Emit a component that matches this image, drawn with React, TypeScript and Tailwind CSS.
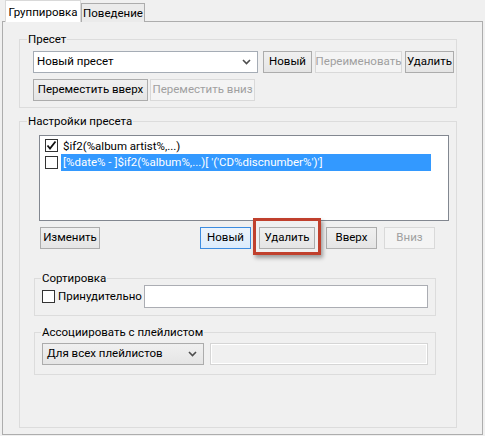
import React from "react";

type BtnProps = {
  children: React.ReactNode;
  w: string;
  disabled?: boolean;
  focused?: boolean;
  className?: string;
};

function Btn({ children, w, disabled = false, focused = false, className = "" }: BtnProps) {
  const look = disabled
    ? "border-[#d9d9d9] bg-[#f4f4f4] text-[#a0a0a0]"
    : focused
      ? "border-[#3c8ce0] bg-linear-to-b from-[#ecf4fc] to-[#dcecfc] text-black"
      : "border-[#acacac] bg-linear-to-b from-[#f0f0f0] to-[#e5e5e5] text-black";
  return (
    <div className={`${w} ${look} ${className} flex h-[22px] shrink-0 items-center justify-center whitespace-nowrap border leading-none`}>
      {children}
    </div>
  );
}

function Chevron() {
  return (
    <svg width="9" height="6" viewBox="0 0 9 6" className="shrink-0">
      <polyline points="1,1 4.5,4.5 8,1" fill="none" stroke="#4d4d4d" strokeWidth="1.6" />
    </svg>
  );
}

function CheckBox({ checked = false }: { checked?: boolean }) {
  return (
    <div className="flex h-[13px] w-[13px] shrink-0 items-center justify-center border border-[#333333] bg-white">
      {checked && (
        <svg width="11" height="11" viewBox="0 0 11 11">
          <polyline points="1.5,5.5 4,8.5 9.5,1.5" fill="none" stroke="#111" strokeWidth="1.8" />
        </svg>
      )}
    </div>
  );
}

function Legend({ children, ml }: { children: React.ReactNode; ml: string }) {
  return <legend className={`${ml} px-[1px] leading-[14px] text-black`}>{children}</legend>;
}

export default function App() {
  return (
    <div className="h-[436px] w-[485px] overflow-hidden bg-[#f0f0f0] font-['Roboto','Liberation_Sans',Arial,sans-serif] text-[11.5px] text-black">
      {/* tab strip */}
      <div className="flex h-[22px] items-end pl-[5px]">
        <div className="relative z-10 flex h-[22px] w-[76px] items-start justify-center border-x border-t border-[#d9d9d9] bg-white pt-[4px] leading-[14px]">
          Группировка
        </div>
        <div className="flex h-[19px] w-[64px] items-start justify-center border-x border-t border-[#acacac] bg-[#ebebeb] pt-[2px] leading-[14px]">
          Поведение
        </div>
      </div>

      {/* tab page */}
      <div className="-mt-px ml-[2px] h-[414px] w-[481px] border border-[#adadad] bg-[#f0f0f0] pt-[10px] pl-[16px]">
        {/* Пресет */}
        <fieldset className="w-[438px] border border-[#dcdcdc]">
          <Legend ml="ml-[7px]">Пресет</Legend>
          <div className="pt-[5px] pb-[6px] pl-[13px]">
            <div className="flex">
              <div className="flex h-[22px] w-[225px] items-center justify-between border border-[#a5acb5] bg-white pr-[6px] pl-[3px]">
                <span>Новый пресет</span>
                <Chevron />
              </div>
              <Btn w="w-[49px]" className="ml-[5px]">Новый</Btn>
              <Btn w="w-[87px]" className="ml-[3px]" disabled>
                Переименовать
              </Btn>
              <Btn w="w-[49px]" className="ml-[3px] border-[#707070]">Удалить</Btn>
            </div>
            <div className="mt-[6px] flex">
              <Btn w="w-[115px]">Переместить вверх</Btn>
              <Btn w="w-[105px]" className="ml-[2px]" disabled>
                Переместить вниз
              </Btn>
            </div>
          </div>
        </fieldset>

        {/* Настройки пресета */}
        <fieldset className="mt-[6px] h-[314px] w-[438px] border border-[#dcdcdc]">
          <Legend ml="ml-[7px]">Настройки пресета</Legend>
          <div className="pt-[7px] pl-[14px]">
            <div className="ml-[5px] h-[86px] w-[410px] border border-[#828790] bg-white pt-px pl-[5px]">
              <div className="flex h-[17px] items-center">
                <CheckBox checked />
                <span className="ml-[5px] leading-[14px]">$if2(%album artist%,...)</span>
              </div>
              <div className="flex h-[17px] items-center">
                <CheckBox />
                <div className="ml-[3px] flex h-[17px] w-[370px] items-center bg-[#3399ff] pl-[2px] text-white">
                  [%date% - ]$if2(%album%,...)[ '('CD%discnumber%')']
                </div>
              </div>
            </div>

            <div className="mt-[6px] ml-[6px] flex">
              <Btn w="w-[60px]">Изменить</Btn>
              <Btn w="w-[51px]" className="ml-[100px]" focused>
                Новый
              </Btn>
              <div className="relative ml-[8px]">
                <Btn w="w-[56px]">Удалить</Btn>
                <div className="absolute top-[-9px] left-[-6px] h-[37px] w-[68px] border-[3px] border-[#c0402d] shadow-[2px_3px_4px_rgba(0,0,0,0.35)]" />
              </div>
              <Btn w="w-[51px]" className="ml-[11px]">Вверх</Btn>
              <Btn w="w-[51px]" className="ml-[7px]" disabled>
                Вниз
              </Btn>
            </div>

            {/* Сортировка */}
            <fieldset className="mt-[22px] w-[402px] border border-[#dcdcdc]">
              <Legend ml="ml-[6px]">Сортировка</Legend>
              <div className="flex items-center pb-[7px] pl-[7px]">
                <div className="flex w-[102px] items-center">
                  <CheckBox />
                  <span className="ml-[3px]">Принудительно</span>
                </div>
                <div className="h-[23px] w-[284px] border border-[#abadb3] bg-white" />
              </div>
            </fieldset>

            {/* Ассоциировать с плейлистом */}
            <fieldset className="mt-[9px] w-[402px] border border-[#dcdcdc]">
              <Legend ml="ml-[6px]">Ассоциировать с плейлистом</Legend>
              <div className="flex pt-[4px] pb-[9px] pl-[7px]">
                <div className="flex h-[22px] w-[162px] items-center justify-between border border-[#acacac] bg-linear-to-b from-[#f0f0f0] to-[#e5e5e5] pr-[6px] pl-[4px]">
                  <span>Для всех плейлистов</span>
                  <Chevron />
                </div>
                <div className="ml-[6px] h-[22px] w-[218px] border border-[#d5d5d5] bg-[#f0f0f0] shadow-[inset_0_0_0_1px_#ffffff]" />
              </div>
            </fieldset>
          </div>
        </fieldset>
      </div>
    </div>
  );
}
